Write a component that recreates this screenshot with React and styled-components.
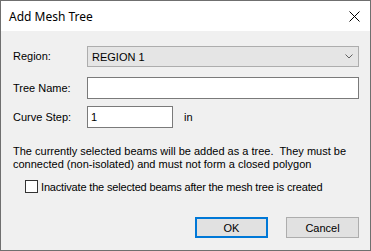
import React from "react";
import styled, { createGlobalStyle } from "styled-components";

const GlobalStyle = createGlobalStyle`
  html, body {
    margin: 0;
    padding: 0;
    background: #ffffff;
  }
  * {
    box-sizing: border-box;
  }
`;

const Window = styled.div`
  width: 371px;
  height: 251px;
  border: 1px solid #6f6f6f;
  display: flex;
  flex-direction: column;
  font-family: "Liberation Sans", Arial, sans-serif;
  font-size: 11px;
  color: #000;
  background: #f0f0f0;
`;

const TitleBar = styled.div`
  height: 30px;
  background: #ffffff;
  display: flex;
  align-items: center;
  justify-content: space-between;
  padding: 0 10px 0 8px;
`;

const Title = styled.span`
  font-family: "Noto Sans", "Liberation Sans", sans-serif;
  font-size: 12px;
  color: #000;
`;

const CloseButton = styled.button`
  border: none;
  background: transparent;
  padding: 0;
  width: 12px;
  height: 12px;
  display: flex;
  align-items: center;
  justify-content: center;
`;

const Body = styled.div`
  flex: 1;
  padding: 15px 11px 0 11px;
  display: flex;
  flex-direction: column;
`;

const FormGrid = styled.div`
  display: grid;
  grid-template-columns: 75px 1fr;
  row-gap: ${(p) => p.$gap || 0}px;
  align-items: center;
`;

const Label = styled.label`
  padding-left: 1px;
  margin-top: ${(p) => p.$shift || 0}px;
`;

const Combo = styled.div`
  height: 21px;
  background: #e5e5e5;
  border: 1px solid #adadad;
  display: flex;
  align-items: center;
  justify-content: space-between;
  padding: 0 5px 0 4px;
`;

const TextBox = styled.div`
  height: 22px;
  width: ${(p) => p.$width || "100%"};
  background: #ffffff;
  border: 1px solid #7a7a7a;
  display: flex;
  align-items: center;
  padding: 0 3px;
`;

const Row = styled.div`
  display: flex;
  align-items: center;
  gap: 11px;
`;

const Spacer = styled.div`
  height: ${(p) => p.$h}px;
`;

const Note = styled.p`
  margin: 0;
  padding-left: 1px;
  line-height: 13px;
  white-space: pre;
`;

const CheckRow = styled.label`
  display: flex;
  align-items: center;
  gap: 3px;
  padding-left: 13px;
  letter-spacing: -0.17px;
`;

const CheckBox = styled.span`
  width: 13px;
  height: 13px;
  border: 1px solid #333333;
  background: #ffffff;
`;

const Buttons = styled.div`
  display: flex;
  justify-content: flex-end;
  gap: 18px;
`;

const Button = styled.button`
  width: 73px;
  height: 21px;
  font-family: "Liberation Sans", Arial, sans-serif;
  font-size: 11px;
  color: #000;
  background: #e1e1e1;
  border: ${(p) => (p.$primary ? "2px solid #0078d7" : "1px solid #adadad")};
  padding: 0;
`;

const Chevron = () => (
  <svg width="8" height="5" viewBox="0 0 8 5">
    <path d="M0.5 0.5 L4 4 L7.5 0.5" fill="none" stroke="#606060" strokeWidth="1" />
  </svg>
);

const CloseIcon = () => (
  <svg width="11" height="11" viewBox="0 0 11 11">
    <path d="M0.5 0.5 L10.5 10.5 M10.5 0.5 L0.5 10.5" stroke="#000" strokeWidth="1" />
  </svg>
);

export default function App() {
  return (
    <>
      <GlobalStyle />
      <Window>
        <TitleBar>
          <Title>Add Mesh Tree</Title>
          <CloseButton aria-label="Close">
            <CloseIcon />
          </CloseButton>
        </TitleBar>
        <Body>
          <FormGrid>
            <Label $shift={-2}>Region:</Label>
            <Combo>
              <span>REGION 1</span>
              <Chevron />
            </Combo>
          </FormGrid>
          <Spacer $h={10} />
          <FormGrid $gap={7}>
            <Label>Tree Name:</Label>
            <TextBox />
            <Label>Curve Step:</Label>
            <Row>
              <TextBox $width="86px">1</TextBox>
              <span>in</span>
            </Row>
          </FormGrid>
          <Spacer $h={17} />
          <Note>
            {"The currently selected beams will be added as a tree.  They must be\nconnected (non-isolated) and must not form a closed polygon"}
          </Note>
          <Spacer $h={9} />
          <CheckRow>
            <CheckBox />
            <span>Inactivate the selected beams after the mesh tree is created</span>
          </CheckRow>
          <Spacer $h={24} />
          <Buttons>
            <Button $primary>OK</Button>
            <Button>Cancel</Button>
          </Buttons>
        </Body>
      </Window>
    </>
  );
}
